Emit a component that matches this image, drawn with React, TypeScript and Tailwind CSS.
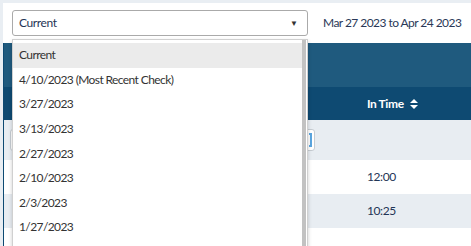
const checks = [
    "Current",
    "4/10/2023 (Most Recent Check)",
    "3/27/2023",
    "3/13/2023",
    "2/27/2023",
    "2/10/2023",
    "2/3/2023",
    "1/27/2023",
];

const rows = [
    { time: "12:00", striped: false },
    { time: "10:25", striped: true },
    { time: "", striped: false },
];

export default function App() {
    return (
        <div
            className="relative w-[471px] h-[246px] overflow-hidden bg-[#e9eef3] pl-[3px] pt-[3px]"
            style={{ fontFamily: "Lato, 'Open Sans', sans-serif" }}
        >
            <div className="bg-white h-full">
                {/* Top bar */}
                <div className="h-[40px] flex items-center pl-[9px]">
                    <div className="w-[296px] h-[26px] border border-[#aaaaaa] rounded-[3px] flex items-center justify-between pl-[6px] pr-[9px]">
                        <span className="text-[12px] tracking-[-0.4px] text-[#1f3556]">Current</span>
                        <span className="text-[8px] text-[#333]">▼</span>
                    </div>
                    <span className="ml-[15px] whitespace-nowrap text-[12px] tracking-[-0.55px] text-[#2a3857]">
                        Mar 27 2023 to Apr 24 2023
                    </span>
                </div>

                {/* Table */}
                <div className="border-l-[1px] border-[#0e4a73]">
                    <div className="h-[44px] bg-[#1f5a7e]" />
                    <div className="h-[33px] bg-[#0e4a72] flex items-center">
                        <div className="w-[363px]" />
                        <span className="flex items-center gap-[6px] text-[12px] font-bold text-white tracking-[-0.4px]">
                            In Time
                            <svg width="8" height="10" viewBox="0 0 8 10" fill="white">
                                <path d="M4 0 L8 4 H0 Z" />
                                <path d="M0 6 H8 L4 10 Z" />
                            </svg>
                        </span>
                    </div>
                    <div className="h-[40px] bg-[#e8edf2] flex items-center pl-[6px]">
                        <div className="w-[305px] h-[22px] bg-white border border-[#c6ccd2] rounded-[3px] flex justify-end items-center pr-[2px]">
                            <div className="w-[3px] h-[14px] border-2 border-l-0 border-[#5aa6e0]" />
                        </div>
                    </div>
                    {rows.map((r, i) => (
                        <div
                            key={i}
                            className={`h-[34px] flex items-center ${r.striped ? "bg-[#e8edf2]" : "bg-white"}`}
                        >
                            <div className="w-[363px]" />
                            <span className="text-[12px] tracking-[-0.4px] text-[#1f3556]">{r.time}</span>
                        </div>
                    ))}
                </div>
            </div>

            {/* Open dropdown */}
            <div className="absolute left-[12px] top-[39px] w-[296px] h-[220px] bg-white border border-[#d0d0d0] shadow-[0_2px_4px_rgba(0,0,0,0.2)] flex">
                <div className="flex-1 pt-[3px]">
                    {checks.map((c, i) => (
                        <div
                            key={c}
                            className={`h-[24.6px] flex items-center pl-[6px] text-[12px] tracking-[-0.6px] text-[#333] ${i === 0 ? "bg-[#ebebeb]" : ""}`}
                        >
                            {c}
                        </div>
                    ))}
                </div>
                <div className="w-[4px] bg-[#c2c2c2] mr-[1px]" />
            </div>
        </div>
    );
}
